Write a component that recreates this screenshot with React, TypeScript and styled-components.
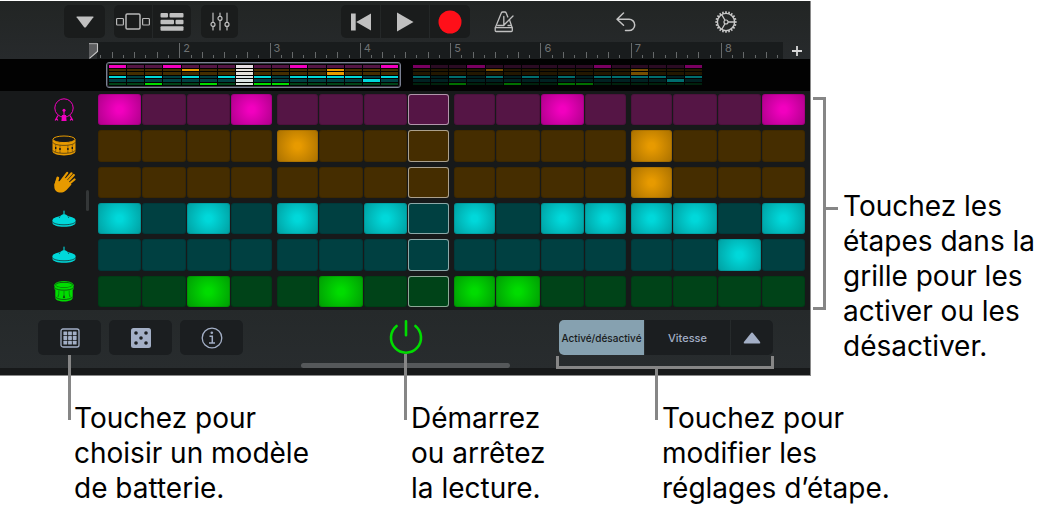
import React from "react";
import styled, { createGlobalStyle, css } from "styled-components";

const GlobalStyle = createGlobalStyle`
  *, *::before, *::after { box-sizing: border-box; }
  body {
    margin: 0;
    background: #fff;
    color: #000;
    font-family: Inter, "Liberation Sans", sans-serif;
  }
  button { font: inherit; padding: 0; margin: 0; border: 0; color: inherit; cursor: pointer; }
  svg { display: block; }
  p { margin: 0; }
`;

/* ---------- data ---------- */

type Tone = "magenta" | "amber" | "cyan" | "green";

const tones: Record<Tone, { on: string; edge: string; off: string }> = {
  magenta: { on: "#f200bf", edge: "#b0008c", off: "#551545" },
  amber: { on: "#e79a00", edge: "#ac7200", off: "#452d00" },
  cyan: { on: "#00d8da", edge: "#00a0a2", off: "#004041" },
  green: { on: "#00dc00", edge: "#009e04", off: "#004318" },
};

interface Track {
  name: string;
  tone: Tone;
  steps: number[];
  icon: React.ReactNode;
}

const CURRENT_STEP = 7;
const STEPS = Array.from({ length: 16 }, (_, i) => i);

/* ---------- icons ---------- */

const KickIcon = () => (
  <svg width="20" height="24" viewBox="0 0 20 24" fill="none" stroke="#f200bf">
    <circle cx="10" cy="10" r="9.2" strokeWidth="1" />
    <path d="M10 12v6" strokeWidth="1.1" />
    <circle cx="10" cy="12.3" r="1.5" fill="#f200bf" stroke="none" />
    <path d="M8 17h4l.6 6H7.4z" fill="#f200bf" stroke="none" />
    <path d="M4 17.5 1.2 22.5M16 17.5l2.8 5M2.6 20.5l1.2 2M17.4 20.5l-1.2 2" strokeWidth="1.3" />
  </svg>
);

const SnareIcon = () => (
  <svg width="24" height="21" viewBox="0 0 24 21">
    <path d="M.5 4.500v11.800C.5 18.600 5.500 20.500 12 20.500s11.500-1.900 11.500-4.200V4.500z" fill="#e79a00" />
    <ellipse cx="12" cy="4.300" rx="11" ry="3.300" fill="#17191a" stroke="#e79a00" />
    <path d="M.8 7.400c1 1.800 5.500 3 11.200 3s10.200-1.200 11.200-3M.8 15.400c1 1.800 5.500 2.900 11.200 2.900s10.200-1.100 11.200-2.900" fill="none" stroke="#17191a" strokeWidth=".6" />
    <path d="M3.700 9.500v7.500M8 10.500v7.500M15.900 10.500v7.500M20.300 9.500v7.500" stroke="#17191a" strokeWidth=".4" />
    <path d="M3.700 12v2M8 13v2M15.900 13v2M20.300 12v2" stroke="#17191a" strokeWidth="1.400" />
  </svg>
);

const HandIcon = () => (
  <svg width="23" height="22" viewBox="0 0 23 22" fill="none" stroke="#e79a00" strokeLinecap="round">
    <path d="M3 9.5C1 13 .5 17.5 3 20c3 2.6 8 1.8 10.500-1l5-5.500L12 6.500 7 10.500z" fill="#e79a00" stroke="none" />
    <path d="m4.800 7-2 7" strokeWidth="2.800" />
    <path d="m7 11.500 7.200-9.700M9.500 12.500l9-10.200M12 13.500 20.800 4M13 15.500 21.500 8.500" strokeWidth="2.200" />
  </svg>
);

const CymbalIcon = () => (
  <svg width="24" height="18" viewBox="0 0 24 18">
    <path d="M.5 10v2.800C.5 15.300 5.500 16.800 12 16.800s11.500-1.500 11.500-4V10z" fill="#00d8da" />
    <ellipse cx="12" cy="10" rx="11.500" ry="4" fill="#00d8da" />
    <path d="M6 7.500 10.300 4.600q1.700-.8 3.400 0L18 7.500z" fill="#00d8da" />
    <path d="M.5 12c1.500 1.700 6 2.800 11.500 2.800s10-1.100 11.500-2.800" fill="none" stroke="#17191a" strokeWidth=".7" />
    <path d="M12 1v5" stroke="#00d8da" strokeWidth="1.100" strokeLinecap="round" />
    <path d="M8 6.400l-.8 1.600M16 6.400l.8 1.600" stroke="#17191a" strokeWidth=".6" />
  </svg>
);

const TomIcon = () => (
  <svg width="20" height="21" viewBox="0 0 20 21">
    <path d="M.5 4v4.500h.8v8.300C1.300 19 5 20.500 10 20.500s8.700-1.500 8.700-3.700V8.500h.8V4z" fill="#00dc00" />
    <ellipse cx="10" cy="4" rx="8.600" ry="2.700" fill="#00dc00" stroke="#17191a" strokeWidth=".5" />
    <ellipse cx="10" cy="4" rx="9.300" ry="3.500" fill="none" stroke="#00dc00" strokeWidth=".9" />
    <path d="M1 7c1.500 1.500 5 2.200 9 2.200S17.500 8.500 19 7M1.500 16c1.500 1.700 5 2.500 8.500 2.500s7-.8 8.500-2.500" fill="none" stroke="#17191a" strokeWidth=".6" />
    <path d="M10 10v4.500M4.800 9.500v4M15.200 9.500v4" stroke="#17191a" strokeWidth=".4" />
    <path d="m10 14.500-.7 2.200h1.400zM4.500 13.500 4 16M15.500 13.500l.5 2.500" fill="#17191a" stroke="#17191a" strokeWidth=".5" />
  </svg>
);

const tracks: Track[] = [
  { name: "Grosse caisse", tone: "magenta", steps: [0, 3, 10, 15], icon: <KickIcon /> },
  { name: "Caisse claire", tone: "amber", steps: [4, 12], icon: <SnareIcon /> },
  { name: "Claquement de mains", tone: "amber", steps: [12], icon: <HandIcon /> },
  { name: "Charleston fermé", tone: "cyan", steps: [0, 2, 4, 6, 8, 10, 11, 12, 13, 15], icon: <CymbalIcon /> },
  { name: "Charleston ouvert", tone: "cyan", steps: [14], icon: <CymbalIcon /> },
  { name: "Tom", tone: "green", steps: [2, 5, 8, 9], icon: <TomIcon /> },
];

const BrowserIcon = () => (
  <svg width="18" height="12" viewBox="0 0 18 12">
    <path d="M1 .5h16q.8 0 .4.8L9.900 11.200q-.9.8-1.800 0L.6 1.300Q.2.5 1 .5z" fill="#c0c0c0" />
  </svg>
);

const SectionsIcon = () => (
  <svg width="34" height="17" viewBox="0 0 34 17" fill="none" stroke="#b8b8b8" strokeWidth="1.200">
    <rect x=".6" y="5.500" width="6.800" height="6.500" rx=".8" />
    <rect x="10" y="1" width="14" height="15" rx="1.200" strokeWidth="1.500" />
    <rect x="26.600" y="5.500" width="6.800" height="6.500" rx=".8" />
  </svg>
);

const TracksIcon = () => (
  <svg width="24" height="18" viewBox="0 0 24 18" fill="#c0c0c0">
    <rect x=".5" y="0" width="7.500" height="4.500" rx="1" />
    <rect x="9.500" y="0" width="14" height="4.500" rx="1" />
    <rect x=".5" y="6.700" width="13.500" height="4.500" rx="1" />
    <rect x="15.500" y="6.700" width="8" height="4.500" rx="1" />
    <rect x=".5" y="13.300" width="23" height="4.500" rx="1" />
  </svg>
);

const MixerIcon = () => (
  <svg width="20" height="19" viewBox="0 0 20 19" fill="none" stroke="#c0c0c0" strokeWidth="1.200" strokeLinecap="round">
    <path d="M3 1v9.300M3 14.500V18M10 1v3.300M10 8.500V18M17 1v9.300M17 14.500V18" />
    <circle cx="3" cy="12.400" r="2" />
    <circle cx="10" cy="6.400" r="2" />
    <circle cx="17" cy="12.400" r="2" />
  </svg>
);

const RewindIcon = () => (
  <svg width="20" height="18" viewBox="0 0 20 18" fill="#c0c0c0">
    <path d="M0 .5h4.700v17H0zM20 .5v17L5.200 9z" />
  </svg>
);

const PlayIcon = () => (
  <svg width="18" height="20" viewBox="0 0 18 20" fill="#c0c0c0">
    <path d="M1 .5 17.500 10 1 19.500z" />
  </svg>
);

const RecordIcon = () => (
  <svg width="24" height="24" viewBox="0 0 24 24">
    <circle cx="12" cy="12" r="11.500" fill="#ff0f19" />
  </svg>
);

const MetronomeIcon = () => (
  <svg width="20" height="22" viewBox="0 0 20 22" fill="none" stroke="#c0c0c0" strokeWidth="1.300" strokeLinejoin="round" strokeLinecap="round">
    <path d="M15.700 9.500 18.300 17v2.500q0 1-1 1H2.200q-1 0-1-1V17L7.300 2q.4-1 1.400-1h2.100q1 0 1.400 1l1.600 4" />
    <path d="M1.500 16.700h16.500M3.700 14.500h6.300M14 14.500h2.500M9.800 5.500v8.500M10 14l9-9" />
  </svg>
);

const UndoIcon = () => (
  <svg width="20" height="20" viewBox="0 0 20 20" fill="none" stroke="#c4c4c4" strokeWidth="1.500" strokeLinecap="round" strokeLinejoin="round">
    <path d="M7.500 1 1 7.200l6.500 6M1 7.200h12a5.700 5.700 0 0 1 0 11.400H9.500" />
  </svg>
);

const teeth = Array.from({ length: 20 }, (_, i) => i * 18);

const GearIcon = () => (
  <svg width="22" height="22" viewBox="0 0 22 22" fill="none" stroke="#c8c8c8">
    <circle cx="11" cy="11" r="8.600" strokeWidth="1.400" />
    <circle cx="11" cy="11" r="2" strokeWidth="1.200" />
    <path d="M13 11h6.500M10 9.300 6.800 3.700M10 12.700l-3.200 5.600" strokeWidth="1.300" />
    {teeth.map((a) => (
      <path key={a} d="M11 .3v2.200" strokeWidth="1.600" transform={`rotate(${a} 11 11)`} />
    ))}
  </svg>
);

const PlayheadIcon = () => (
  <svg width="10" height="16" viewBox="0 0 10 16">
    <path d="M0 0h9v8.500L0 16z" fill="#5d5e60" />
    <path d="M0 .6h8.500" stroke="#9a9a9c" strokeWidth="1.200" />
    <path d="M8.500.5v8L.5 15.300" fill="none" stroke="#c6c6c6" strokeWidth="1.100" />
  </svg>
);

const PlusIcon = () => (
  <svg width="10" height="10" viewBox="0 0 10 10" stroke="#d8d8d8" strokeWidth="1.800">
    <path d="M5 0v10M0 5h10" />
  </svg>
);

const PatternIcon = () => (
  <svg width="20" height="20" viewBox="0 0 20 20" fill="none" stroke="#a3afc6">
    <rect x="1" y="1" width="18" height="18" rx="2" strokeWidth="1.300" />
    {[3.4, 8.1, 12.8].map((y) =>
      [3.4, 8.1, 12.8].map((x) => (
        <rect key={`${x}-${y}`} x={x} y={y} width="3.800" height="3.800" rx=".4" fill="#a3afc6" stroke="none" />
      )),
    )}
  </svg>
);

const DiceIcon = () => (
  <svg width="20" height="20" viewBox="0 0 20 20">
    <rect x="0" y="0" width="20" height="20" rx="2.500" fill="#a3afc6" />
    <g fill="#1b1e20">
      <circle cx="5" cy="5" r="1.800" />
      <circle cx="15" cy="5" r="1.800" />
      <circle cx="10" cy="10" r="1.800" />
      <circle cx="5" cy="15" r="1.800" />
      <circle cx="15" cy="15" r="1.800" />
    </g>
  </svg>
);

const InfoIcon = () => (
  <svg width="22" height="22" viewBox="0 0 22 22" fill="none" stroke="#a3afc6">
    <circle cx="11" cy="11" r="9.800" strokeWidth="1.300" />
    <circle cx="10.800" cy="5.800" r="1.300" fill="#a3afc6" stroke="none" />
    <path d="M8.500 9.200h2.800v6.600M8 16h6" strokeWidth="1.500" />
  </svg>
);

const PowerIcon = () => (
  <svg width="34" height="34" viewBox="0 0 34 34" fill="none" stroke="#00dc00" strokeWidth="2.600" strokeLinecap="round">
    <path d="M17 1.300v14M7.600 6a15 15 0 1 0 18.800 0" />
  </svg>
);

const ExpandIcon = () => (
  <svg width="18" height="12" viewBox="0 0 18 12">
    <path d="M8.300.7q.7-.6 1.400 0l7.400 9.300q.7 1.500-.8 1.500H1.700Q.2 11.500.9 10z" fill="#a3afc6" />
  </svg>
);

/* ---------- page ---------- */

const Figure = styled.main`
  display: grid;
  grid-template-columns: minmax(0, 1fr) 234px;
  padding-top: 1px;
`;

const Device = styled.section`
  background: #17191a;
  border-right: 1px solid #8a8a8a;
  border-bottom: 1px solid #8a8a8a;
`;

const TopChrome = styled.header`
  background: linear-gradient(#222524, #272a2c);
`;

const Toolbar = styled.div`
  display: flex;
  align-items: center;
  height: 41px;
  padding: 0 73px 0 64px;
`;

const Spacer = styled.div<{ $grow: number }>`
  flex: ${(p) => p.$grow} 1 0;
`;

const ButtonGroup = styled.div<{ $gap?: number }>`
  display: flex;
  gap: 1px;
  margin-right: ${(p) => p.$gap ?? 0}px;
  border-radius: 5px;
  overflow: hidden;
`;

const ToolButton = styled.button<{ $width: number }>`
  display: grid;
  place-items: center;
  width: ${(p) => p.$width}px;
  height: 33px;
  background: #1a1c1c;
`;

const BareButton = styled.button`
  background: none;
`;

/* ---------- ruler ---------- */

const RulerRow = styled.div`
  display: flex;
  height: 17px;
  padding-left: 89px;
`;

const RulerScale = styled.div`
  position: relative;
  display: flex;
  flex: 1;
  background: linear-gradient(90deg, transparent 8px, #191c1d 8px);
`;

const Playhead = styled.div`
  position: absolute;
  top: 1px;
  left: 0;
`;

const Bar = styled.div<{ $units: number }>`
  display: flex;
  flex: ${(p) => p.$units} 1 0;
  align-items: flex-end;
  position: relative;
`;

const BarNumber = styled.span`
  position: absolute;
  top: 0;
  left: 4px;
  color: #6f7273;
  font-size: 11px;
  line-height: 12px;
`;

const Tick = styled.i<{ $size: "bar" | "beat" | "half" | "none"; $units: number }>`
  flex: ${(p) => p.$units} 1 0;
  height: ${(p) => ({ bar: 15, beat: 6, half: 3, none: 0 })[p.$size]}px;
  margin-bottom: 1px;
  border-left: 1px solid ${(p) => (p.$size === "none" ? "transparent" : "#66696a")};
`;

const AddSection = styled.button`
  display: grid;
  place-items: center;
  width: 27px;
  background: none;
`;

/* ---------- overview ---------- */

const Overview = styled.div`
  display: flex;
  gap: 9px;
  height: 32px;
  padding: 3px 105px 3px 106px;
  background: #020202;
`;

const Region = styled.div<{ $active?: boolean }>`
  display: grid;
  grid-template-columns: repeat(16, 1fr);
  grid-template-rows: repeat(6, 1fr);
  gap: 1px;
  flex: 1;
  padding: 2px;
  border: 1px solid transparent;
  border-radius: 3px;
  ${(p) => (p.$active ? css`border-color: #7a8092; box-shadow: inset 0 0 0 1px #34373f;` : css`opacity: 0.5;`)}
`;

const RegionCell = styled.i<{ $tone: Tone; $on: boolean; $lit: boolean }>`
  background-color: ${(p) => (p.$on ? tones[p.$tone].on : tones[p.$tone].off)};
  ${(p) => p.$lit && css`background-image: linear-gradient(rgba(255, 255, 255, 0.86), rgba(255, 255, 255, 0.86));`}
`;

/* ---------- step grid ---------- */

const Sequencer = styled.div`
  display: grid;
  grid-template-columns: 81px minmax(0, 1fr);
  height: 219px;
  padding: 3px 5px 3px 0;
`;

const Rows = styled.div`
  display: grid;
  grid-template-rows: repeat(6, 1fr);
  gap: 5px;
`;

const TrackHeads = styled(Rows)`
  padding-left: 47px;
`;

const TrackHead = styled.button`
  display: grid;
  place-items: center;
  background: none;
`;

const GridPane = styled.div`
  display: grid;
  grid-template-columns: 17px minmax(0, 1fr);
  align-items: stretch;
`;

const ScrollHandle = styled.div`
  align-self: center;
  width: 3px;
  height: 21px;
  margin-left: 5px;
  border-radius: 2px;
  background: #343738;
`;

const StepRow = styled.div`
  display: grid;
  grid-template-columns: repeat(16, 1fr);
  gap: 1px;
`;

const Step = styled.button<{ $tone: Tone; $current: boolean }>`
  border-radius: 3px;
  background: ${(p) => tones[p.$tone].off};
  box-shadow: inset 0 0 0 1px ${(p) => (p.$current ? "rgba(255, 255, 255, 0.55)" : "rgba(0, 0, 0, 0.1)")};

  &:nth-child(4n):not(:last-child) { margin-right: 2px; }
  &:nth-child(4n + 1):not(:first-child) { margin-left: 2px; }
  &[aria-pressed="true"] {
    background: radial-gradient(circle farthest-corner, ${(p) => tones[p.$tone].on} 12%, ${(p) => tones[p.$tone].edge} 95%);
  }
`;

/* ---------- footer ---------- */

const Footer = styled.footer`
  background: linear-gradient(#25292a, #282c2e);
`;

const FooterRow = styled.div`
  display: grid;
  grid-template-columns: 1fr auto 1fr;
  align-items: start;
  padding: 10px 37px 0 38px;
`;

const FooterLeft = styled.div`
  display: flex;
  gap: 8px;
`;

const FooterButton = styled.button`
  position: relative;
  display: grid;
  place-items: center;
  width: 63px;
  height: 35px;
  border-radius: 5px;
  background: #1b1e20;
`;

const PowerButton = styled.button`
  position: relative;
  background: none;
`;

const Segmented = styled.div`
  position: relative;
  display: flex;
  gap: 1px;
  justify-self: end;
`;

const Segment = styled.button<{ $selected?: boolean; $width: number }>`
  display: grid;
  place-items: center;
  width: ${(p) => p.$width}px;
  height: 35px;
  background: ${(p) => (p.$selected ? "#86a1b0" : "#1b1e20")};
  color: ${(p) => (p.$selected ? "#17191a" : "#a3afc6")};
  font-size: ${(p) => (p.$selected ? 10 : 11)}px;
  font-weight: 500;

  &:first-child { border-radius: 5px 0 0 5px; }
  &:nth-child(3) { border-radius: 0 5px 5px 0; }
`;

const HomeIndicator = styled.div`
  width: 209px;
  height: 5px;
  margin: 8px auto 7px;
  border-radius: 3px;
  background: #55585a;
`;

/* ---------- callouts ---------- */

const LINE = "#868686";

const Leader = styled.span<{ $length: number }>`
  position: absolute;
  top: 100%;
  left: calc(50% - 2px);
  width: 3px;
  height: ${(p) => p.$length}px;
  background: ${LINE};
`;

const BottomBracket = styled.span`
  position: absolute;
  top: calc(100% + 1px);
  left: -3px;
  right: -1px;
  height: 13px;
  border: 3px solid ${LINE};
  border-top: 0;
`;

const BracketStem = styled.span`
  position: absolute;
  top: 100%;
  left: calc(50% - 10px);
  width: 3px;
  height: 54px;
  background: ${LINE};
`;

const SideNote = styled.aside`
  display: flex;
  align-items: flex-start;
  padding: 96px 0 0 2px;
`;

const SideBracket = styled.div`
  position: relative;
  flex: none;
  width: 13px;
  height: 213px;
  margin-right: 17px;
  border: 3px solid ${LINE};
  border-left: 0;

  &::after {
    content: "";
    position: absolute;
    top: 107px;
    left: 100%;
    width: 15px;
    height: 3px;
    background: ${LINE};
  }
`;

const Caption = styled.p`
  font-size: 28px;
  line-height: 35px;
  white-space: nowrap;
`;

const SideCaption = styled(Caption)`
  padding-top: 92px;
`;

const Captions = styled.div`
  grid-column: 1 / -1;
  display: grid;
  grid-template-columns: 337fr 251fr 383fr;
  padding: 25px 0 0 74px;
`;

const barNumbers = [1, 2, 3, 4, 5, 6, 7, 8];

const Ruler = () => (
  <RulerRow>
    <RulerScale>
      {barNumbers.map((n) => {
        const last = n === 8;
        const ticks = last ? 6 : 8;
        return (
          <Bar key={n} $units={last ? 5.5 : 8}>
            {n > 1 && <BarNumber>{n}</BarNumber>}
            {Array.from({ length: ticks }, (_, i) => (
              <Tick
                key={i}
                $units={last && i === 5 ? 0.5 : 1}
                $size={i === 0 ? (n === 1 ? "none" : "bar") : i % 2 === 0 ? "beat" : "half"}
              />
            ))}
          </Bar>
        );
      })}
      <Playhead><PlayheadIcon /></Playhead>
    </RulerScale>
    <AddSection aria-label="Ajouter une section"><PlusIcon /></AddSection>
  </RulerRow>
);

const MiniRegion = ({ active }: { active?: boolean }) => (
  <Region $active={active}>
    {tracks.map((t) =>
      STEPS.map((s) => (
        <RegionCell
          key={`${t.name}-${s}`}
          $tone={t.tone}
          $on={t.steps.includes(s)}
          $lit={!!active && s === CURRENT_STEP}
        />
      )),
    )}
  </Region>
);

export default function App() {
  return (
    <>
      <GlobalStyle />
      <Figure>
        <Device>
          <TopChrome>
            <Toolbar>
              <ButtonGroup $gap={9}>
                <ToolButton $width={41} aria-label="Navigateur"><BrowserIcon /></ToolButton>
              </ButtonGroup>
              <ButtonGroup $gap={10}>
                <ToolButton $width={38} aria-label="Instruments"><SectionsIcon /></ToolButton>
                <ToolButton $width={38} aria-label="Pistes"><TracksIcon /></ToolButton>
              </ButtonGroup>
              <ButtonGroup>
                <ToolButton $width={37} aria-label="Réglages de piste"><MixerIcon /></ToolButton>
              </ButtonGroup>
              <Spacer $grow={103} />
              <ButtonGroup $gap={24}>
                <ToolButton $width={39} aria-label="Retour au début"><RewindIcon /></ToolButton>
                <ToolButton $width={48} aria-label="Lecture"><PlayIcon /></ToolButton>
                <ToolButton $width={40} aria-label="Enregistrer"><RecordIcon /></ToolButton>
              </ButtonGroup>
              <BareButton aria-label="Métronome"><MetronomeIcon /></BareButton>
              <Spacer $grow={101} />
              <BareButton aria-label="Annuler"><UndoIcon /></BareButton>
              <Spacer $grow={79} />
              <BareButton aria-label="Réglages"><GearIcon /></BareButton>
            </Toolbar>
            <Ruler />
          </TopChrome>
          <Overview>
            <MiniRegion active />
            <MiniRegion />
          </Overview>
          <Sequencer>
            <TrackHeads>
              {tracks.map((t) => (
                <TrackHead key={t.name} aria-label={t.name}>{t.icon}</TrackHead>
              ))}
            </TrackHeads>
            <GridPane>
              <ScrollHandle />
              <Rows>
                {tracks.map((t) => (
                  <StepRow key={t.name}>
                    {STEPS.map((s) => (
                      <Step
                        key={s}
                        $tone={t.tone}
                        $current={s === CURRENT_STEP}
                        aria-pressed={t.steps.includes(s)}
                        aria-label={`${t.name}, étape ${s + 1}`}
                      />
                    ))}
                  </StepRow>
                ))}
              </Rows>
            </GridPane>
          </Sequencer>
          <Footer>
            <FooterRow>
              <FooterLeft>
                <FooterButton aria-label="Modèles">
                  <PatternIcon />
                  <Leader $length={65} />
                </FooterButton>
                <FooterButton aria-label="Aléatoire"><DiceIcon /></FooterButton>
                <FooterButton aria-label="Informations"><InfoIcon /></FooterButton>
              </FooterLeft>
              <PowerButton aria-label="Marche/arrêt">
                <PowerIcon />
                <Leader $length={66} />
              </PowerButton>
              <Segmented>
                <Segment $selected $width={85}>Activé/désactivé</Segment>
                <Segment $width={85}>Vitesse</Segment>
                <Segment $width={42} aria-label="Autres réglages"><ExpandIcon /></Segment>
                <BottomBracket><BracketStem /></BottomBracket>
              </Segmented>
            </FooterRow>
            <HomeIndicator />
          </Footer>
        </Device>
        <SideNote>
          <SideBracket />
          <SideCaption>
            Touchez les<br />étapes dans la<br />grille pour les<br />activer ou les<br />désactiver.
          </SideCaption>
        </SideNote>
        <Captions>
          <Caption>Touchez pour<br />choisir un modèle<br />de batterie.</Caption>
          <Caption>Démarrez<br />ou arrêtez<br />la lecture.</Caption>
          <Caption>Touchez pour<br />modifier les<br />réglages d’étape.</Caption>
        </Captions>
      </Figure>
    </>
  );
}
